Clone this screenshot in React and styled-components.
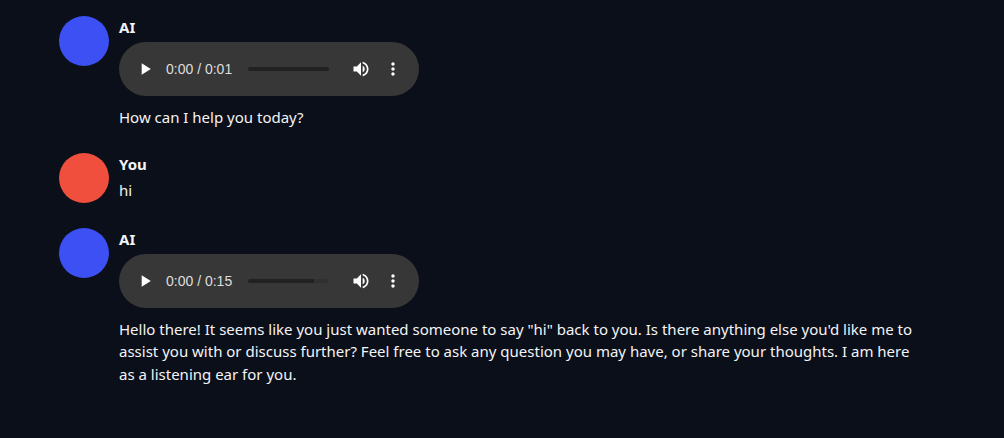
import React, { useState } from 'react';
import styled, { createGlobalStyle } from 'styled-components';

const GlobalStyle = createGlobalStyle`
  * { box-sizing: border-box; }
  body {
    margin: 0;
    background: #0b0f19;
    color: #f3f4f6;
    font-family: 'Noto Sans', sans-serif;
    font-size: 15px;
    line-height: 1.5;
  }
`;

const Chat = styled.main`
  display: flex;
  flex-direction: column;
  gap: 25px;
  padding: 16px 80px 24px 59px;
`;

const Message = styled.article`
  display: flex;
  align-items: flex-start;
  gap: 10px;
`;

const Avatar = styled.div`
  flex: none;
  width: 50px;
  height: 50px;
  border-radius: 50%;
  background: ${(p) => p.$color};
`;

const Body = styled.div`
  flex: 1;
  min-width: 0;
`;

const Author = styled.h2`
  margin: 0 0 3px;
  font-size: 15px;
  font-weight: 700;
`;

const Text = styled.p`
  margin: 0;
`;

const PlayerBar = styled.div`
  display: flex;
  align-items: center;
  width: 300px;
  max-width: 100%;
  height: 54px;
  margin-bottom: 10px;
  padding: 0 10px;
  border-radius: 27px;
  background: #373737;
`;

const IconButton = styled.button`
  display: flex;
  flex: none;
  align-items: center;
  justify-content: center;
  width: 32px;
  height: 32px;
  padding: 0;
  border: 0;
  background: none;
  color: #fff;
  cursor: pointer;
`;

const Time = styled.span`
  margin-left: 5px;
  color: #dedede;
  font-family: 'Liberation Sans', sans-serif;
  font-size: 14px;
  line-height: 20px;
  white-space: nowrap;
`;

const Seek = styled.input`
  appearance: none;
  flex: 1;
  min-width: 0;
  height: 4px;
  margin: 0 16px;
  border-radius: 2px;
  background: linear-gradient(to right, #212121 ${(p) => p.$buffered}%, #303030 ${(p) => p.$buffered}%);
  cursor: pointer;

  &::-webkit-slider-thumb {
    appearance: none;
    width: 4px;
    height: 4px;
    opacity: 0;
  }
`;

const Icon = ({ d }) => (
  <svg width="20" height="20" viewBox="0 0 24 24" fill="currentColor" aria-hidden="true">
    <path d={d} />
  </svg>
);

const icons = {
  play: 'M8 5v14l11-7z',
  pause: 'M6 19h4V5H6v14zm8-14v14h4V5h-4z',
  volume:
    'M3 9v6h4l5 5V4L7 9H3zm13.5 3c0-1.77-1.02-3.29-2.5-4.03v8.05c1.48-.73 2.5-2.25 2.5-4.02zM14 3.23v2.06c2.89.86 5 3.54 5 6.71s-2.11 5.85-5 6.71v2.06c4.01-.91 7-4.49 7-8.77s-2.99-7.86-7-8.77z',
  muted: 'M7 9v6h4l5 5V4l-5 5H7z',
  more: 'M12 8c1.1 0 2-.9 2-2s-.9-2-2-2-2 .9-2 2 .9 2 2 2zm0 2c-1.1 0-2 .9-2 2s.9 2 2 2 2-.9 2-2-.9-2-2-2zm0 6c-1.1 0-2 .9-2 2s.9 2 2 2 2-.9 2-2-.9-2-2-2z',
};

const format = (s) => `0:${String(s).padStart(2, '0')}`;

function Player({ duration, buffered }) {
  const [playing, setPlaying] = useState(false);
  const [muted, setMuted] = useState(false);
  const [position, setPosition] = useState(0);
  return (
    <PlayerBar role="group" aria-label="Audio player">
      <IconButton type="button" aria-label={playing ? 'Pause' : 'Play'} onClick={() => setPlaying(!playing)}>
        <Icon d={playing ? icons.pause : icons.play} />
      </IconButton>
      <Time>{`${format(position)} / ${format(duration)}`}</Time>
      <Seek
        type="range"
        aria-label="Seek"
        min="0"
        max={duration}
        value={position}
        $buffered={buffered}
        onChange={(e) => setPosition(Number(e.target.value))}
      />
      <IconButton type="button" aria-label={muted ? 'Unmute' : 'Mute'} onClick={() => setMuted(!muted)}>
        <Icon d={muted ? icons.muted : icons.volume} />
      </IconButton>
      <IconButton type="button" aria-label="More options">
        <Icon d={icons.more} />
      </IconButton>
    </PlayerBar>
  );
}

const messages = [
  { author: 'AI', audio: { duration: 1, buffered: 100 }, text: 'How can I help you today?' },
  { author: 'You', text: 'hi' },
  {
    author: 'AI',
    audio: { duration: 15, buffered: 81 },
    text: 'Hello there! It seems like you just wanted someone to say "hi" back to you. Is there anything else you\'d like me to assist you with or discuss further? Feel free to ask any question you may have, or share your thoughts. I am here as a listening ear for you.',
  },
];

const avatarColors = { AI: '#3c50f4', You: '#f04f3e' };

export default function App() {
  return (
    <>
      <GlobalStyle />
      <Chat>
        {messages.map((m, i) => (
          <Message key={i}>
            <Avatar $color={avatarColors[m.author]} />
            <Body>
              <Author>{m.author}</Author>
              {m.audio && <Player {...m.audio} />}
              <Text>{m.text}</Text>
            </Body>
          </Message>
        ))}
      </Chat>
    </>
  );
}
